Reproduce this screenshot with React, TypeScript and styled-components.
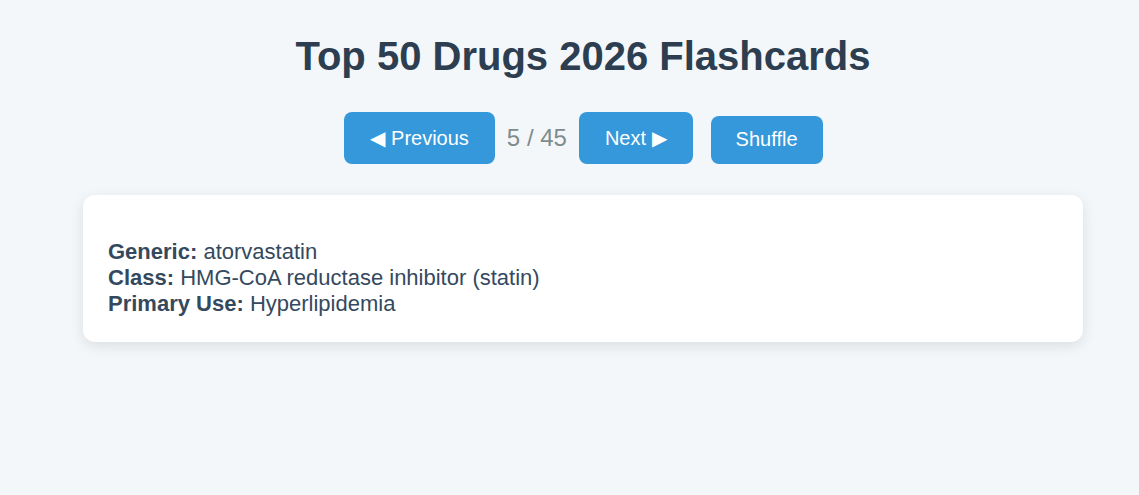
import React, { useState } from "react";
import styled, { createGlobalStyle } from "styled-components";

const GlobalStyle = createGlobalStyle`
  html, body {
    margin: 0;
    padding: 0;
    background: #f4f7fa;
    font-family: "Liberation Sans", Arial, sans-serif;
  }
`;

const Page = styled.div`
  min-height: 495px;
  box-sizing: border-box;
  padding: 34px 0 0 27px;
  display: flex;
  flex-direction: column;
  align-items: center;
`;

const Title = styled.h1`
  margin: 0 0 33px;
  font-size: 40px;
  font-weight: bold;
  color: #2c3e50;
`;

const Controls = styled.div`
  display: flex;
  align-items: flex-end;
  margin: 0 0 31px 1px;
`;

const Button = styled.button<{ $tall?: boolean; $gap?: number }>`
  border: none;
  border-radius: 8px;
  background: #3498db;
  color: #ffffff;
  font-family: "Liberation Sans", Arial, sans-serif;
  font-size: 20px;
  padding: ${(p) => (p.$tall ? "14px 26px" : "12px 25px 13px")};
  margin-left: ${(p) => p.$gap ?? 0}px;
  cursor: pointer;
`;

const Counter = styled.span`
  font-size: 24px;
  color: #7f8c8d;
  margin: 0 12px 0 12px;
  align-self: center;
`;

const Card = styled.div`
  width: 1000px;
  box-sizing: border-box;
  background: #ffffff;
  border-radius: 12px;
  box-shadow: 0 4px 14px rgba(0, 0, 0, 0.1);
  padding: 44px 25px 25px;
  font-size: 22px;
  color: #34495e;
`;

const Line = styled.div`
  line-height: 26px;
`;

const Label = styled.strong`
  font-weight: bold;
`;

const cards = [
  { generic: "atorvastatin", cls: "HMG-CoA reductase inhibitor (statin)", use: "Hyperlipidemia" },
];

export default function App() {
  const [index] = useState(4);
  const card = cards[0];
  return (
    <>
      <GlobalStyle />
      <Page>
        <Title>Top 50 Drugs 2026 Flashcards</Title>
        <Controls>
          <Button $tall>◀ Previous</Button>
          <Counter>{index + 1} / 45</Counter>
          <Button $tall>Next ▶</Button>
          <Button $gap={18}>Shuffle</Button>
        </Controls>
        <Card>
          <Line>
            <Label>Generic:</Label> {card.generic}
          </Line>
          <Line>
            <Label>Class:</Label> {card.cls}
          </Line>
          <Line>
            <Label>Primary Use:</Label> {card.use}
          </Line>
        </Card>
      </Page>
    </>
  );
}
